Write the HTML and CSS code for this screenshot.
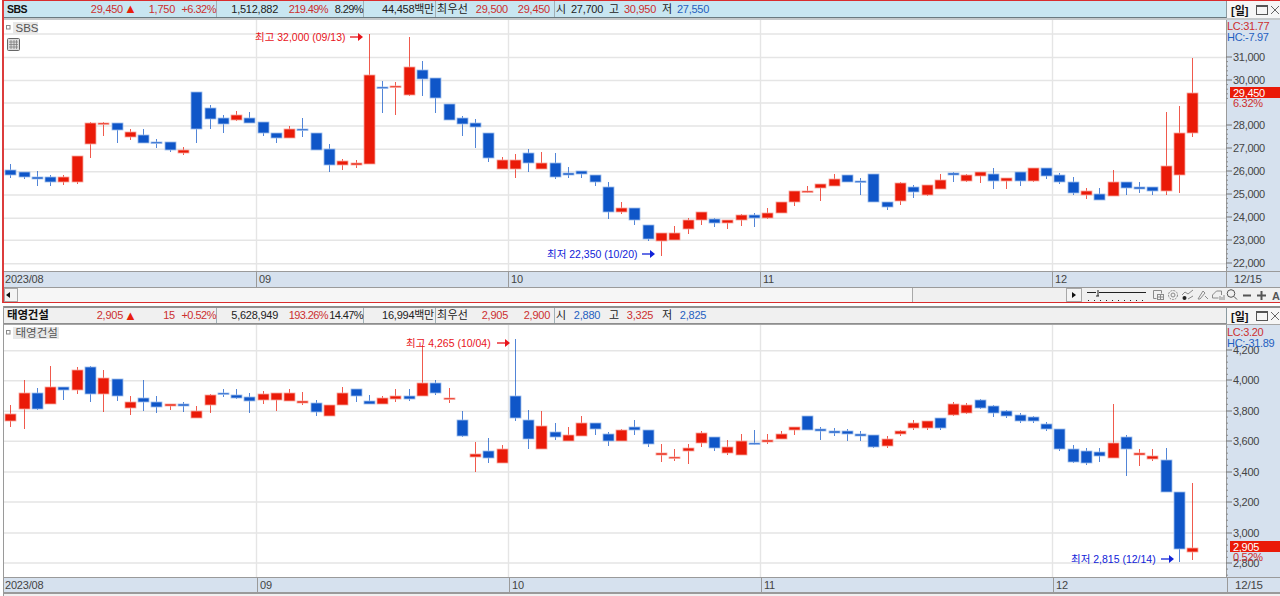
FILE: index.html
```html
<!DOCTYPE html>
<html lang="ko">
<head>
<meta charset="utf-8">
<title>차트</title>
<link rel="stylesheet" href="styles.css">
</head>
<body>
<section class="win win-a">
  <div class="head">
    <div class="quote quote-a">
      <b class="name">SBS</b>
      <span class="price up">29,450</span><span class="tri">▲</span>
      <span class="chg up">1,750</span>
      <span class="pct up sep">+6.32%</span>
      <span class="vol">1,512,882</span>
      <span class="rate up">219.49%</span>
      <span class="turn sep">8.29%</span>
      <span class="amt sep">44,458백만</span>
      <span class="lab">최우선</span>
      <span class="bid up">29,500</span>
      <span class="ask up sep">29,450</span>
      <span class="k">시</span><span class="v">27,700</span>
      <span class="k">고</span><span class="v up">30,950</span>
      <span class="k">저</span><span class="v dn">27,550</span>
    </div>
    <div class="ctl"><b class="per">[일]</b><i class="box"></i><svg class="x" viewBox="0 0 10 10"><path d="M1 1l8 8M9 1l-8 8"/></svg></div>
  </div>
  <div class="body">
    <svg class="plot" id="plotA" width="1222" height="251" viewBox="4 20 1222 251"></svg>
    <svg class="axis" id="axisA" width="54" height="251" viewBox="1226 20 54 251"></svg>
  </div>
  <div class="time">
    <span class="t t1">2023/08</span><span class="t t2">09</span><span class="t t2">10</span><span class="t t3">11</span><span class="t t4">12</span><span class="t t5">12/15</span>
  </div>
  <div class="scroll">
    <button class="sb sb-l"></button>
    <div class="track"></div>
    <div class="thumb"></div>
    <button class="sb sb-r"></button>
    <svg class="tools" width="198" height="14" viewBox="1082 288 198 14">
      <path class="ink2" d="M1087 292.500h9M1099 292.500h47"/><path class="ink2" d="M1098 290v6M1096 296h3"/>
      <path class="ink2" stroke-dasharray="1 5" d="M1088 300.500h60"/>
      <path class="tl" d="M1153.500 290.500h8v3M1153.500 290.500v8h3"/><rect class="tl" x="1157.500" y="294.500" width="6" height="5"/><path class="tl" d="M1160.500 294.500v5M1157.500 297h6"/>
      <circle class="tl dash" cx="1173" cy="295" r="4.500"/><circle class="tl" cx="1173" cy="295" r="2"/>
      <path class="tl" d="M1182 295l3-3 3 2 5-4"/><circle class="gear" cx="1184.500" cy="298" r="2"/><path class="tl" d="M1188 299l5-3"/>
      <path class="tl" d="M1198 299l5-8 2 2-5 6zM1205 296l3 3"/>
      <path class="tl" d="M1212.500 295l4-4h5v4M1212.500 295v3h6"/><path class="tl" d="M1220 296v4M1222 297v3M1224 295v5"/>
      <circle class="ink" cx="1231" cy="293.500" r="3.800"/><path class="ink" d="M1234 296.500l3 3"/>
      <path class="bold" d="M1243 295.500h8M1257 295.500h9M1261.500 291v9"/>
      <text class="atext" x="1272" y="300">A</text>
    </svg>
  </div>
</section>

<section class="win win-b">
  <div class="head">
    <div class="quote quote-b">
      <b class="name">태영건설</b>
      <span class="price up">2,905</span><span class="tri">▲</span>
      <span class="chg up">15</span>
      <span class="pct up sep">+0.52%</span>
      <span class="vol">5,628,949</span>
      <span class="rate up">193.26%</span>
      <span class="turn sep">14.47%</span>
      <span class="amt sep">16,994백만</span>
      <span class="lab">최우선</span>
      <span class="bid up">2,905</span>
      <span class="ask up sep">2,900</span>
      <span class="k">시</span><span class="v dn">2,880</span>
      <span class="k">고</span><span class="v up">3,325</span>
      <span class="k">저</span><span class="v dn">2,825</span>
    </div>
    <div class="ctl"><b class="per">[일]</b><i class="box"></i><svg class="x" viewBox="0 0 10 10"><path d="M1 1l8 8M9 1l-8 8"/></svg></div>
  </div>
  <div class="body">
    <svg class="plot" id="plotB" width="1222" height="252" viewBox="4 325 1222 252"></svg>
    <svg class="axis" id="axisB" width="54" height="252" viewBox="1226 325 54 252"></svg>
  </div>
  <div class="time">
    <span class="t t1">2023/08</span><span class="t t2">09</span><span class="t t2">10</span><span class="t t3">11</span><span class="t t4">12</span><span class="t t5">12/15</span>
  </div>
  <div class="scroll"></div>
</section>
<script src="chart.js"></script>
</body>
</html>
```
FILE: styles.css
```css
* { box-sizing: border-box; }
html, body { margin: 0; height: 596px; overflow: hidden; background: #fff; }
body { font: 11px "Liberation Sans", "Noto Sans CJK KR", sans-serif; color: #222; }

.win { background: #fff; }
.win-a { height: 303px; margin-left: 2px; border-left: 2px solid #dc3c3c; border-top: 1px solid #d92c2c; border-bottom: 1px solid #d92c2c; }
.win-b { height: 293px; margin: 3px 0 0 3px; border-left: 1px solid #9a9a9a; }

.head { display: flex; justify-content: space-between; align-items: stretch; }
.win-a .head { height: 19px; border-bottom: 2px solid #c4c8ca; }
.win-b .head { height: 19px; border-top: 2px solid #8e8e8e; border-bottom: 1px solid #a6a6a6; }

.quote { width: 1223px; display: flex; align-items: center; border-bottom: 1px solid #6a7a80; border-right: 1px solid #8a9aa0; white-space: nowrap; }
.quote-a { background: #c8e6f1; }
.quote-b { background: #f0f0f0; border-bottom-color: #8e8e8e; }
.quote > * { height: 100%; line-height: 16px; display: block; letter-spacing: -.25px; }
.win-b .quote > * { line-height: 15px; }

.quote > .name { width: 76px; padding-left: 3px; font-size: 10.5px; letter-spacing: -.5px; color: #111; }
.win-b .quote > .name { font-size: 11.5px; letter-spacing: -.2px; }
.price, .chg, .pct, .vol, .rate, .turn, .amt, .bid, .ask { text-align: right; }
.price { width: 43px; }
.quote > .tri { width: 11px; padding-left: 1px; color: #e8200c; font-size: 13px; letter-spacing: 0; }
.chg { width: 41px; }
.quote > .pct { width: 42px; letter-spacing: -.5px; }
.vol { width: 61px; }
.quote > .rate { width: 50px; letter-spacing: -.6px; }
.quote > .turn { width: 36px; letter-spacing: -.6px; }
.amt { width: 72px; padding-right: 1px; }
.quote > .lab { width: 33px; padding-left: 1px; letter-spacing: .3px; }
.bid { width: 39px; }
.ask { width: 47px; padding-right: 4px; }
.k { width: 11px; padding-left: 1px; }
.v { width: 42px; text-align: center; }
.sep { border-right: 1px solid #a0b0b6; }
.up { color: #cc2f2f; }
.dn { color: #1f5fc0; }

.ctl { flex: 1; display: flex; align-items: center; background: #f6f6f6; padding-left: 4px; }
.per { width: 25px; font-size: 11px; color: #111; }
.box { display: block; width: 12px; height: 10px; border: 1px solid #555; box-shadow: inset 0 2px 0 -1px #555; }
.x { width: 10px; height: 10px; margin-left: 2px; fill: none; stroke: #666; }

.body { display: flex; }
.plot, .axis { display: block; flex: none; }
.axis { background: #d6e1ee; }
.plot text, .axis text { font-family: "Liberation Sans", "Noto Sans CJK KR", sans-serif; }
.axis text { letter-spacing: -.3px; }

.time { display: flex; height: 17px; background: #d6e1ee; border-top: 1px solid #9a9a9a; border-bottom: 1px solid #9a9a9a; color: #444; line-height: 15px; }
.win-b .time { height: 16px; }
.t { display: block; padding-left: 2px; border-left: 1px solid #9a9a9a; letter-spacing: -.2px; }
.t:first-child { border-left: 0; padding-left: 1px; }
.t1 { width: 252px; }
.t2 { width: 252px; }
.t3 { width: 292px; }
.t4 { width: 174px; }
.t5 { flex: 1; padding-left: 7px; font-size: 11.5px; }
.win-b .t1 { width: 253px; }

.scroll { display: flex; height: 14px; background: #f0f0f0; }
.win-b .scroll { border-top: 1px solid #9a9a9a; }
.sb { position: relative; width: 14px; height: 14px; padding: 0; flex: none; background: #f4f4f4; border: 1px solid #a8a8a8; }
.sb::after { content: ""; position: absolute; top: 3px; border: 3px solid transparent; }
.sb-l::after { left: 1px; border-right: 4px solid #111; border-left: 0; }
.sb-r { width: 16px; }
.sb-r::after { left: 5px; border-left: 4px solid #111; border-right: 0; }
.track { width: 894px; background: #f6f6f6; }
.thumb { width: 154px; background: #f0f0f0; border-left: 1px solid #a8a8a8; }
.tools { display: block; flex: none; fill: none; }
.ink { stroke: #555; }
.ink2 { stroke: #222; }
.tl { stroke: #8a8a8a; fill: none; }
.dash { stroke-dasharray: 2 1; }
.gear { fill: #222; }
.bold { stroke: #555; stroke-width: 2; }
.atext { fill: #555; font-size: 11px; font-weight: bold; }
```
FILE: chart.js
```js
// [up, wickTop, bodyTop, bodyBottom, wickBottom]
var A = [
[0,164,170,175,178],[0,172,172,177,179],[0,171,177,179,186],[0,175,177,182,186],[1,175,177,182,185],
[1,156,156,182,184],[1,122,123,144,158],[1,122,123,124,136],[0,123,123,130,143],[1,129,132,137,140],
[0,129,135,143,143],[0,139,142,143,148],[0,142,142,150,152],[1,147,150,153,155],[0,92,92,129,143],
[0,105,108,119,129],[0,115,118,124,133],[1,111,115,120,121],[0,112,118,123,123],[0,122,122,133,136],
[0,133,133,138,143],[1,126,129,138,138],[0,118,129,130,137],[0,133,133,150,150],[0,144,149,165,172],
[1,159,161,165,170],[1,160,163,165,168],[1,34,75,164,164],[0,81,87,88,113],[1,82,86,87,115],
[1,37,67,95,96],[0,61,70,79,96],[0,78,78,98,113],[0,104,104,120,120],[0,116,118,124,136],
[0,119,123,127,148],[0,133,133,158,162],[1,157,160,169,169],[1,154,160,169,178],[0,149,153,163,172],
[1,152,163,169,169],[0,153,163,177,179],[0,167,173,175,178],[0,171,171,174,178],[0,175,175,182,186],
[0,182,187,212,219],[1,202,208,212,214],[0,208,208,220,225],[0,225,225,239,241],[1,233,233,241,256],
[1,226,233,240,240],[1,218,220,229,234],[1,212,212,220,225],[0,218,219,223,227],[1,220,220,223,229],
[1,214,215,220,226],[0,213,215,218,227],[1,208,213,218,219],[1,202,202,213,213],[1,191,191,202,206],
[1,186,191,192,193],[1,184,184,188,201],[1,174,179,186,186],[0,175,175,182,182],[0,178,181,182,195],
[0,174,174,202,202],[0,202,202,207,210],[1,182,183,201,205],[0,185,187,192,198],[1,185,185,195,196],
[1,174,180,189,189],[0,172,173,175,182],[1,174,175,181,182],[1,172,172,176,183],[0,168,174,181,189],
[1,178,178,181,189],[0,172,172,181,186],[1,168,168,181,182],[0,168,168,176,179],[0,173,175,182,184],
[0,177,182,193,195],[1,188,191,195,199],[0,188,194,200,200],[1,170,182,196,196],[0,182,182,188,195],
[0,182,187,189,193],[0,187,187,191,195],[1,112,166,191,195],[1,106,133,175,193],[1,58,93,133,137]
];
var B = [
[1,405,414,421,427],[1,380,393,409,429],[0,388,393,409,410],[1,366,387,404,404],[0,387,387,390,400],
[1,367,370,390,394],[0,366,367,394,402],[1,370,378,394,412],[0,379,379,396,401],[1,396,402,408,415],
[0,380,398,402,411],[0,396,402,407,413],[1,404,404,406,410],[0,402,404,406,412],[1,406,411,418,418],
[1,394,395,405,413],[0,389,393,394,397],[0,389,395,398,399],[0,393,397,401,413],[1,391,394,400,404],
[1,393,393,400,411],[1,389,393,401,401],[1,392,401,403,405],[0,400,403,412,416],[1,405,405,416,416],
[1,387,393,405,405],[0,389,389,396,402],[0,395,401,404,404],[1,396,398,404,404],[1,389,396,399,402],
[0,389,396,399,401],[1,345,383,396,396],[0,380,383,393,395],[1,388,398,399,403],[0,411,420,436,437],
[1,442,454,457,472],[0,438,451,458,463],[1,445,449,463,463],[0,339,396,418,421],[0,410,420,439,449],
[1,411,426,449,449],[0,423,432,437,440],[1,427,435,441,441],[1,416,423,436,436],[0,423,423,429,435],
[0,432,434,441,446],[1,429,430,441,441],[0,420,427,430,435],[0,430,430,444,447],[1,444,453,455,462],
[1,449,457,458,461],[1,444,448,451,464],[1,431,433,443,447],[0,437,437,448,451],[1,440,447,453,455],
[1,434,441,455,455],[0,430,443,444,445],[1,434,440,442,444],[1,431,434,439,439],[1,427,427,430,435],
[0,416,416,430,430],[0,427,429,431,440],[0,428,431,433,436],[0,429,431,434,441],[0,431,434,436,441],
[0,435,435,447,448],[1,436,439,446,448],[1,430,431,434,436],[1,420,423,428,430],[1,421,421,428,430],
[0,418,418,428,430],[1,402,404,415,416],[1,403,405,413,414],[0,399,400,408,409],[0,405,406,413,417],
[0,410,411,416,418],[0,413,415,421,423],[0,416,417,421,423],[0,422,424,429,431],[0,429,429,449,451],
[0,445,449,462,463],[0,448,451,463,465],[0,448,452,456,462],[1,404,443,458,458],[0,435,437,449,476],
[1,449,453,455,466],[1,449,456,459,461],[0,448,460,492,492],[0,492,492,549,562],[1,483,548,552,560]
];

function grid(ys, y0, y1) {
  var s = '';
  ys.forEach(function (y) { s += '<path d="M4 ' + y + 'H1226" stroke="#e5e5e5" stroke-width="1.4"/>'; });
  [256.5, 508.5, 760.5, 1052.5].forEach(function (x) {
    s += '<path d="M' + x + ' ' + y0 + 'V' + y1 + '" stroke="#e5e5e5" stroke-width="1.4"/>';
  });
  return s;
}

function candles(data) {
  var s = '';
  data.forEach(function (d, i) {
    var x = Math.round(10.3 + 13.28 * i) + 0.5;
    var c = d[0] ? '#ea1a08' : '#0f56c8';
    var halo = d[0] ? '#f7a79e' : '#9dbdec';
    s += '<path d="M' + x + ' ' + d[1] + 'V' + d[4] + '" stroke="' + c + '" stroke-opacity=".72"/>';
    var h = Math.max(d[3] - d[2], 1.5);
    s += '<rect x="' + (x - 5.5) + '" y="' + d[2] + '" width="11" height="' + h + '" fill="' + c + '" stroke="' + halo + '" stroke-width=".8"/>';
  });
  return s;
}

function note(txt, x, y, color, ax) {
  return '<text x="' + x + '" y="' + (y + 4) + '" fill="' + color + '" font-size="10.5">' + txt + '</text>' +
    '<path d="M' + ax + ' ' + y + 'h11" stroke="' + color + '" stroke-width="1.3"/>' +
    '<path d="M' + (ax + 13) + ' ' + y + 'l-5-4v8z" fill="' + color + '"/>';
}

function legend(name, w) {
  return '<rect x="6.500" y="' + (w.y + 3.5) + '" width="3.500" height="3.500" fill="none" stroke="#888"/>' +
    '<rect x="13" y="' + w.y + '" width="' + w.w + '" height="12" fill="#e8e8e8"/>' +
    '<text x="15.500" y="' + (w.y + 10) + '" fill="#555" font-size="11.500">' + name + '</text>';
}

function axis(labels, step, o) {
  var s = '<path d="M1226.500 ' + o.y0 + 'v260" stroke="#9a9a9a"/>';
  labels.forEach(function (l) {
    s += '<path d="M1226 ' + l[1] + 'h6" stroke="#777"/>';
    for (var k = 1; k < 5; k++) {
      s += '<path d="M1226 ' + (l[1] + k * step / 5) + 'h2" stroke="#8a8a8a"/>';
    }
    s += '<text x="1233" y="' + (l[1] + 4) + '" fill="#444" font-size="11">' + l[0] + '</text>';
  });
  s += '<rect x="1227" y="' + (o.top - 2) + '" width="53" height="' + o.hdr + '" fill="#d6e1ee"/>';
  s += '<text x="1227" y="' + (o.top + 8) + '" fill="#cc2f2f" font-size="11">' + o.lc + '</text>';
  s += '<text x="1227" y="' + (o.top + 19) + '" fill="#1f5fc0" font-size="11">' + o.hc + '</text>';
  s += '<rect x="1230" y="' + o.tag + '" width="50" height="11" fill="#ea1a08"/>';
  s += '<text x="1233" y="' + (o.tag + 9.5) + '" fill="#fff" font-size="11">' + o.price + '</text>';
  s += '<text x="1233" y="' + (o.tag + 19.5) + '" fill="#cc2f2f" font-size="11">' + o.pct + '</text>';
  return s;
}

document.getElementById('plotA').innerHTML =
  grid([34, 57.5, 80.5, 103, 126, 149.3, 171.7, 195, 218.3, 240.3, 263.7], 20, 271) +
  candles(A) +
  legend('SBS', { y: 22, w: 25 }) +
  '<rect x="7.500" y="38.500" width="12" height="12" rx="1" fill="#ddd" stroke="#666"/>' +
  '<path d="M9 42h9M9 44.500h9M9 47h9M11 40v9M14 40v9M16.500 40v9" stroke="#777" stroke-width=".7"/>' +
  note('최고 32,000 (09/13)', 255, 37, '#e8141a', 350) +
  note('최저 22,350 (10/20)', 547, 254, '#1022d8', 642);

document.getElementById('plotB').innerHTML =
  grid([350.7, 380.7, 411.3, 441.3, 472, 502, 533, 563], 325, 577) +
  candles(B) +
  legend('태영건설', { y: 327, w: 46 }) +
  note('최고 4,265 (10/04)', 406, 343, '#e8141a', 497) +
  note('최저 2,815 (12/14)', 1071, 559, '#1022d8', 1161);

document.getElementById('axisA').innerHTML = axis(
  [['31,000', 57], ['30,000', 80], ['28,000', 125], ['27,000', 148], ['26,000', 171], ['25,000', 194], ['24,000', 217], ['23,000', 240], ['22,000', 263]],
  23, { y0: 20, top: 22, hdr: 22, lc: 'LC:31.77', hc: 'HC:-7.97', tag: 87, price: '29,450', pct: '6.32%' });

document.getElementById('axisB').innerHTML = axis(
  [['4,200', 350], ['4,000', 380], ['3,800', 411], ['3,600', 441], ['3,400', 472], ['3,200', 502], ['3,000', 533], ['2,800', 563]],
  30.4, { y0: 325, top: 328, hdr: 20, lc: 'LC:3.20', hc: 'HC:-31.89', tag: 541, price: '2,905', pct: '0.52%' });
```
